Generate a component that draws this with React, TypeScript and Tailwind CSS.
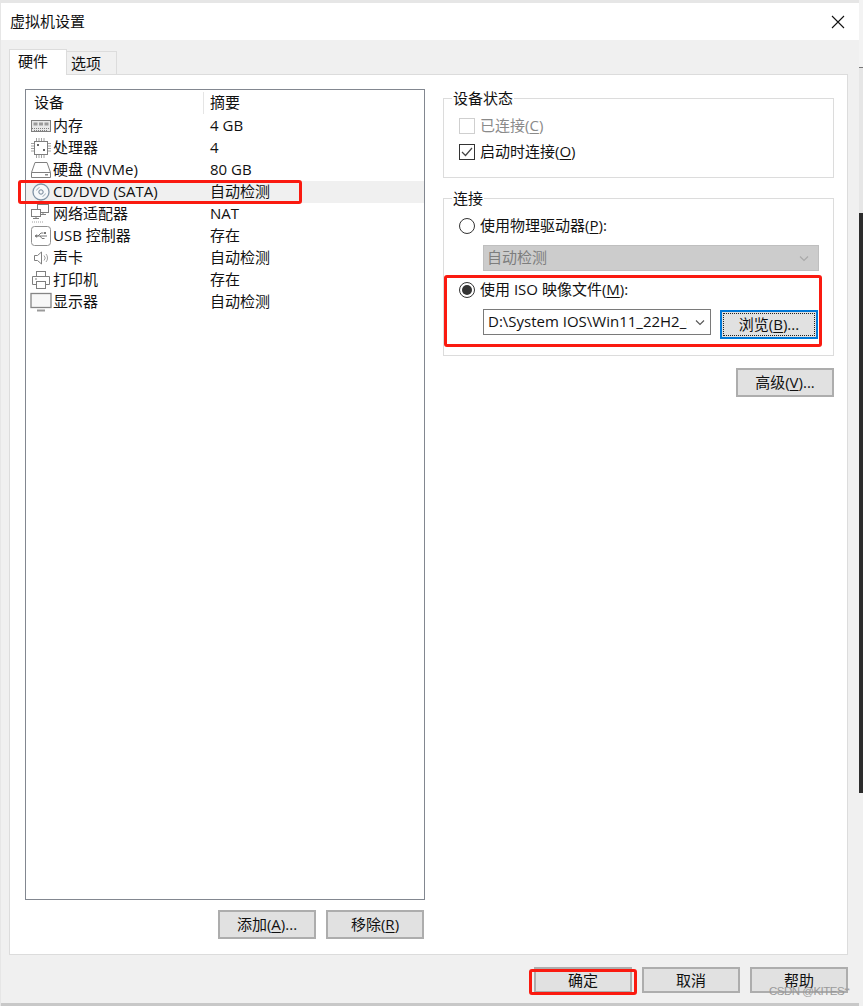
import React from "react";

const FONT = "font-['Open_Sans','Noto_Sans_CJK_SC',sans-serif]";

function Key({ k }: { k: string }) {
  return <span className="underline underline-offset-[2px]">{k}</span>;
}

function IconBox({ children }: { children: React.ReactNode }) {
  return (
    <svg width="22" height="22" viewBox="0 0 22 22" fill="none" stroke="#7f7f7f" strokeWidth="1" className="shrink-0">
      {children}
    </svg>
  );
}

const icons: Record<string, React.ReactNode> = {
  mem: (
    <>
      <rect x="1.5" y="5.5" width="19" height="11" fill="#e8e8e8" />
      <rect x="3.5" y="7.5" width="4" height="3" fill="#9a9a9a" stroke="none" />
      <rect x="9" y="7.5" width="4" height="3" fill="#9a9a9a" stroke="none" />
      <rect x="14.5" y="7.5" width="4" height="3" fill="#9a9a9a" stroke="none" />
      <path d="M2 13.5h18M4 15.5h14" strokeDasharray="1 1" />
    </>
  ),
  cpu: (
    <>
      <rect x="4.5" y="4.5" width="13" height="13" />
      <path d="M6.5 1v3M9 1v3M11.5 1v3M14 1v3M6.5 18v3M9 18v3M11.5 18v3M14 18v3M1 6.5h3M1 9h3M1 11.5h3M1 14h3M18 6.5h3M18 9h3M18 11.5h3M18 14h3" stroke="#a0a0a0" />
      <rect x="7" y="7" width="2" height="2" fill="#666" stroke="none" />
      <rect x="13" y="12" width="2" height="2" fill="#666" stroke="none" />
    </>
  ),
  hdd: (
    <>
      <path d="M5 3.5h12l3.5 10v5h-19v-5z" />
      <path d="M1.5 13.5h19" />
      <rect x="15" y="15" width="3" height="1.5" fill="#8a8a8a" stroke="none" />
    </>
  ),
  cd: (
    <>
      <circle cx="11" cy="11" r="8" stroke="#7f93a5" strokeWidth="1.3" fill="#f6f8fa" />
      <circle cx="11" cy="11" r="2.2" stroke="#6f8294" />
      <path d="M6.5 9.5a5 5 0 0 1 3-3M15.5 12.5a5 5 0 0 1-3 3" stroke="#a0aeb9" />
    </>
  ),
  net: (
    <>
      <rect x="7.5" y="1.5" width="11" height="8" />
      <path d="M13 9.5v2M10 11.5h6" />
      <rect x="1.5" y="6.5" width="9" height="7" fill="#fff" />
      <path d="M6 13.5v2M3 15.5h6" />
      <path d="M2 19h11" strokeDasharray="1 1" stroke="#a0a0a0" />
    </>
  ),
  usb: (
    <>
      <rect x="1.5" y="1.5" width="19" height="19" rx="3" stroke="#909090" />
      <path d="M5 11h12M8 11l3-3h2.5M10 11l2 2.5h2.5" stroke="#777" />
      <path d="M5 11l2-1.2v2.4z" fill="#777" />
      <rect x="14" y="7" width="2" height="2" fill="#777" stroke="none" />
    </>
  ),
  snd: (
    <>
      <path d="M4.5 8.5h3l4-3.5v12l-4-3.5h-3z" />
      <path d="M14 8.5a3.5 3.5 0 0 1 0 5M16 7a6 6 0 0 1 0 8" stroke="#a0a0a0" />
    </>
  ),
  prn: (
    <>
      <rect x="6.5" y="2.5" width="9" height="5" />
      <path d="M6 15.5H2.5v-8h17v8H16" />
      <rect x="6.5" y="12.5" width="9" height="7" />
      <path d="M5 10h2" />
    </>
  ),
  mon: (
    <>
      <rect x="1" y="2.5" width="20" height="14" strokeWidth="1.3" stroke="#858585" fill="#f7f7f7" />
      <path d="M7 19.5h8" strokeWidth="2" stroke="#9a9a9a" />
    </>
  ),
};

const rows = [
  ["mem", "内存", "4 GB"],
  ["cpu", "处理器", "4"],
  ["hdd", "硬盘 (NVMe)", "80 GB"],
  ["cd", "CD/DVD (SATA)", "自动检测"],
  ["net", "网络适配器", "NAT"],
  ["usb", "USB 控制器", "存在"],
  ["snd", "声卡", "自动检测"],
  ["prn", "打印机", "存在"],
  ["mon", "显示器", "自动检测"],
];

function Btn({ children, className = "" }: { children: React.ReactNode; className?: string }) {
  return (
    <div className={`w-[98px] flex items-center justify-center bg-[#e1e1e1] border-2 border-[#adadad] text-[15px] text-[#111] ${className}`}>
      {children}
    </div>
  );
}

function Group({ title, className, children }: { title: string; className: string; children: React.ReactNode }) {
  return (
    <div className={`relative border border-[#dcdcdc] pl-[15px] pt-[19px] ${className}`}>
      <span className="absolute left-[8px] top-[-11px] bg-white px-[1px] text-[15px] leading-[20px] text-[#111]">{title}</span>
      {children}
    </div>
  );
}

function Radio({ on }: { on?: boolean }) {
  return (
    <span className="w-[16px] h-[16px] rounded-full border border-[#333] bg-white flex items-center justify-center shrink-0">
      {on && <span className="w-[10px] h-[10px] rounded-full bg-[#333]" />}
    </span>
  );
}

const Chevron = ({ c }: { c: string }) => (
  <svg width="10" height="7" viewBox="0 0 10 7" fill="none" stroke={c} strokeWidth="1.1" className="shrink-0">
    <path d="M1 1.5l4 4 4-4" />
  </svg>
);

function RedBox({ className }: { className: string }) {
  return <div className={`absolute border-[3px] border-[#fa1a10] rounded-[3px] ${className}`} />;
}

export default function App() {
  return (
    <div className={`relative w-[863px] h-[1006px] overflow-hidden flex bg-[#e6e6e6] ${FONT}`}>
      <div className="w-[1px] shrink-0" />
      <div className="w-[858px] h-full pt-[3px] flex flex-col shrink-0">
        {/* Dialog window */}
        <div className="h-[1000px] flex flex-col bg-[#f0f0f0]">
          <div className="h-[37px] shrink-0 bg-white flex items-center justify-between pl-[9px] pr-[14px]">
            <span className="text-[15px] text-[#111]">虚拟机设置</span>
            <svg width="14" height="14" viewBox="0 0 14 14" stroke="#111" strokeWidth="1.1">
              <path d="M1 1l12 12M13 1L1 13" />
            </svg>
          </div>
          <div className="flex-1 flex flex-col pl-[8px] pt-[9px]">
            {/* Tabs */}
            <div className="h-[25px] flex items-end relative z-10">
              <div className="w-[58px] h-[26px] mb-[-1px] pl-[8px] pb-[3px] bg-white border border-b-0 border-[#dcdcdc] flex items-center text-[15px] text-[#111]">硬件</div>
              <div className="w-[50px] h-[23px] pl-[4px] bg-[#f0f0f0] border border-l-0 border-b-0 border-[#dcdcdc] flex items-center text-[15px] text-[#111]">选项</div>
            </div>
            {/* Panel */}
            <div className="w-[839px] h-[881px] bg-white border border-[#dcdcdc] flex pl-[15px] pt-[14px] gap-[18px]">
              {/* Left column */}
              <div className="w-[400px] flex flex-col gap-[10px]">
                <div className="h-[811px] border border-[#828790] pt-[2px]">
                  <div className="h-[22px] flex text-[15px] text-[#111] leading-[20px]">
                    <div className="w-[178px] pl-[8px] border-r border-[#e5e5e5]">设备</div>
                    <div className="pl-[6px]">摘要</div>
                  </div>
                  <div className="mt-[1px]">
                    {rows.map(([ic, name, val]) => (
                      <div key={ic} className={`h-[22px] flex items-center text-[15px] text-[#111] ${ic === "cd" ? "bg-[#f0f0f0]" : ""}`}>
                        <div className="w-[184px] flex items-center pl-[4px] gap-[1px] whitespace-nowrap">
                          <IconBox>{icons[ic]}</IconBox>
                          <span className="mt-[-2px]">{name}</span>
                        </div>
                        <span className="mt-[-2px]">{val}</span>
                      </div>
                    ))}
                  </div>
                </div>
                <div className="flex justify-end gap-[10px] pr-[1px]">
                  <Btn className="h-[29px]">添加(<Key k="A" />)...</Btn>
                  <Btn className="h-[29px]">移除(<Key k="R" />)</Btn>
                </div>
              </div>
              {/* Right column */}
              <div className="w-[391px] pt-[9px] flex flex-col">
                <Group title="设备状态" className="h-[80px]">
                  <div className="flex flex-col gap-[10px]">
                    <div className="h-[16px] flex items-center gap-[5px] text-[15px] text-[#8a8a8a] whitespace-nowrap">
                      <span className="w-[16px] h-[16px] border border-[#cfcfcf] shrink-0" />
                      <span className="mt-[-2px]">已连接(<Key k="C" />)</span>
                    </div>
                    <div className="h-[16px] flex items-center gap-[5px] text-[15px] text-[#111] whitespace-nowrap">
                      <span className="w-[16px] h-[16px] border border-[#333] shrink-0 flex items-center justify-center">
                        <svg width="12" height="10" viewBox="0 0 12 10" fill="none" stroke="#444" strokeWidth="1.2"><path d="M1 5l3.5 3.5L11 1" /></svg>
                      </span>
                      <span className="mt-[-2px]">启动时连接(<Key k="O" />)</span>
                    </div>
                  </div>
                </Group>
                <Group title="连接" className="h-[158px] mt-[20px]">
                  <div className="h-[16px] flex items-center gap-[5px] text-[15px] text-[#111] whitespace-nowrap">
                    <Radio />
                    <span className="mt-[-2px]">使用物理驱动器(<Key k="P" />):</span>
                  </div>
                  <div className="ml-[24px] mt-[11px] w-[336px] h-[26px] bg-[#cccccc] border border-[#bfbfbf] flex items-center justify-between pl-[3px] pr-[9px] text-[15px] text-[#7d7d7d]">
                    <span className="mt-[-2px]">自动检测</span>
                    <Chevron c="#a8a8a8" />
                  </div>
                  <div className="mt-[11px] h-[16px] flex items-center gap-[5px] text-[15px] text-[#111] whitespace-nowrap">
                    <Radio on />
                    <span className="mt-[-2px]">使用 ISO 映像文件(<Key k="M" />):</span>
                  </div>
                  <div className="ml-[24px] mt-[11px] flex items-start gap-[9px]">
                    <div className="w-[228px] h-[26px] border border-[#7a7a7a] bg-white flex items-center pl-[4px] pr-[5px] text-[15px] text-[#111]">
                      <span className="flex-1 mt-[-2px] overflow-hidden whitespace-nowrap">D:\System IOS\Win11_22H2_Chinese</span>
                      <span className="ml-[8px]"><Chevron c="#555" /></span>
                    </div>
                    <div className="w-[98px] h-[29px] mt-[1px] border-2 border-[#0078d7] bg-[#e1e1e1] p-[1px]">
                      <div className="w-full h-full border border-dotted border-[#222] flex items-center justify-center text-[15px] text-[#111]">
                        浏览(<Key k="B" />)...
                      </div>
                    </div>
                  </div>
                </Group>
                <div className="flex justify-end mt-[12px]">
                  <Btn className="h-[29px]">高级(<Key k="V" />)...</Btn>
                </div>
              </div>
            </div>
            {/* Footer */}
            <div className="mt-[12px] w-[839px] flex justify-end gap-[10px]">
              <Btn className="h-[26px]">确定</Btn>
              <Btn className="h-[26px]">取消</Btn>
              <Btn className="h-[26px]">帮助</Btn>
            </div>
          </div>
        </div>
        <div className="flex-1 bg-[#c8c8c8]" />
      </div>
      {/* Desktop sliver on the right */}
      <div className="w-[4px] h-full flex flex-col shrink-0">
        <div className="h-[67px] bg-[#f3f3f3]" />
        <div className="h-[1px] bg-[#777]" />
        <div className="h-[145px] bg-[#e6e6e6]" />
        <div className="h-[580px] bg-[#2c2c2c]" />
        <div className="flex-1 bg-[#f0f0f0]" />
      </div>
      <RedBox className="left-[18px] top-[180px] w-[284px] h-[24px]" />
      <RedBox className="left-[444px] top-[275px] w-[378px] h-[72px]" />
      <RedBox className="left-[529px] top-[969px] w-[108px] h-[26px]" />
      <span className="absolute left-[769px] top-[984px] text-[11.5px] tracking-[-0.5px] leading-[14px] text-[#9a9a9a] font-['Liberation_Sans',sans-serif]">CSDN @KITES<span className="text-[8px] align-top">**</span></span>
    </div>
  );
}
